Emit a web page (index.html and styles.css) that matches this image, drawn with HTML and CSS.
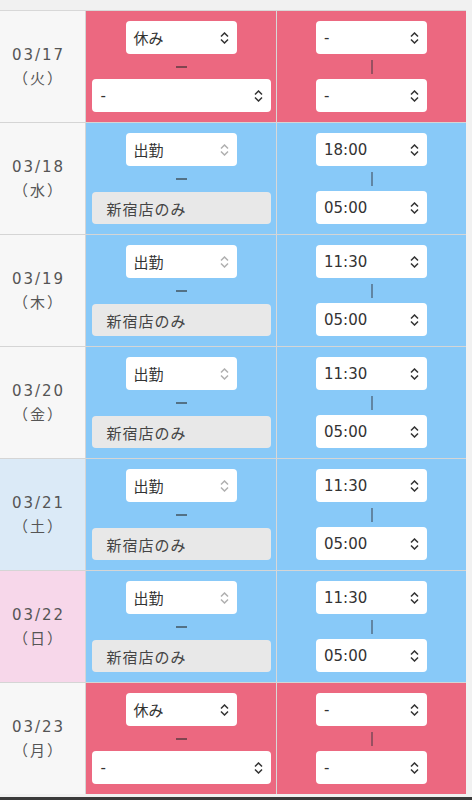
FILE: index.html
```html
<!DOCTYPE html>
<html lang="ja">
<head>
<meta charset="utf-8">
<link rel="stylesheet" href="styles.css">
</head>
<body>
<div class="page">
  <div class="table">

    <div class="row off">
      <div class="date"><span>03/17</span><span>（火）</span></div>
      <div class="cell">
        <div class="sel short"><span>休み</span><svg class="arr" viewBox="0 0 9 12"><path d="M1 4.5 L4.5 1 L8 4.5 M1 7.5 L4.5 11 L8 7.5"/></svg></div>
        <div class="dash"></div>
        <div class="sel wide"><span>-</span><svg class="arr" viewBox="0 0 9 12"><path d="M1 4.5 L4.5 1 L8 4.5 M1 7.5 L4.5 11 L8 7.5"/></svg></div>
      </div>
      <div class="cell">
        <div class="sel short"><span>-</span><svg class="arr" viewBox="0 0 9 12"><path d="M1 4.5 L4.5 1 L8 4.5 M1 7.5 L4.5 11 L8 7.5"/></svg></div>
        <div class="vbar"></div>
        <div class="sel short"><span>-</span><svg class="arr" viewBox="0 0 9 12"><path d="M1 4.5 L4.5 1 L8 4.5 M1 7.5 L4.5 11 L8 7.5"/></svg></div>
      </div>
    </div>

    <div class="row on">
      <div class="date"><span>03/18</span><span>（水）</span></div>
      <div class="cell">
        <div class="sel short"><span>出勤</span><svg class="arr dim" viewBox="0 0 9 12"><path d="M1 4.5 L4.5 1 L8 4.5 M1 7.5 L4.5 11 L8 7.5"/></svg></div>
        <div class="dash"></div>
        <div class="shop">新宿店のみ</div>
      </div>
      <div class="cell">
        <div class="sel short"><span>18:00</span><svg class="arr" viewBox="0 0 9 12"><path d="M1 4.5 L4.5 1 L8 4.5 M1 7.5 L4.5 11 L8 7.5"/></svg></div>
        <div class="vbar"></div>
        <div class="sel short"><span>05:00</span><svg class="arr" viewBox="0 0 9 12"><path d="M1 4.5 L4.5 1 L8 4.5 M1 7.5 L4.5 11 L8 7.5"/></svg></div>
      </div>
    </div>

    <div class="row on">
      <div class="date"><span>03/19</span><span>（木）</span></div>
      <div class="cell">
        <div class="sel short"><span>出勤</span><svg class="arr dim" viewBox="0 0 9 12"><path d="M1 4.5 L4.5 1 L8 4.5 M1 7.5 L4.5 11 L8 7.5"/></svg></div>
        <div class="dash"></div>
        <div class="shop">新宿店のみ</div>
      </div>
      <div class="cell">
        <div class="sel short"><span>11:30</span><svg class="arr" viewBox="0 0 9 12"><path d="M1 4.5 L4.5 1 L8 4.5 M1 7.5 L4.5 11 L8 7.5"/></svg></div>
        <div class="vbar"></div>
        <div class="sel short"><span>05:00</span><svg class="arr" viewBox="0 0 9 12"><path d="M1 4.5 L4.5 1 L8 4.5 M1 7.5 L4.5 11 L8 7.5"/></svg></div>
      </div>
    </div>

    <div class="row on">
      <div class="date"><span>03/20</span><span>（金）</span></div>
      <div class="cell">
        <div class="sel short"><span>出勤</span><svg class="arr dim" viewBox="0 0 9 12"><path d="M1 4.5 L4.5 1 L8 4.5 M1 7.5 L4.5 11 L8 7.5"/></svg></div>
        <div class="dash"></div>
        <div class="shop">新宿店のみ</div>
      </div>
      <div class="cell">
        <div class="sel short"><span>11:30</span><svg class="arr" viewBox="0 0 9 12"><path d="M1 4.5 L4.5 1 L8 4.5 M1 7.5 L4.5 11 L8 7.5"/></svg></div>
        <div class="vbar"></div>
        <div class="sel short"><span>05:00</span><svg class="arr" viewBox="0 0 9 12"><path d="M1 4.5 L4.5 1 L8 4.5 M1 7.5 L4.5 11 L8 7.5"/></svg></div>
      </div>
    </div>

    <div class="row on">
      <div class="date sat"><span>03/21</span><span>（土）</span></div>
      <div class="cell">
        <div class="sel short"><span>出勤</span><svg class="arr dim" viewBox="0 0 9 12"><path d="M1 4.5 L4.5 1 L8 4.5 M1 7.5 L4.5 11 L8 7.5"/></svg></div>
        <div class="dash"></div>
        <div class="shop">新宿店のみ</div>
      </div>
      <div class="cell">
        <div class="sel short"><span>11:30</span><svg class="arr" viewBox="0 0 9 12"><path d="M1 4.5 L4.5 1 L8 4.5 M1 7.5 L4.5 11 L8 7.5"/></svg></div>
        <div class="vbar"></div>
        <div class="sel short"><span>05:00</span><svg class="arr" viewBox="0 0 9 12"><path d="M1 4.5 L4.5 1 L8 4.5 M1 7.5 L4.5 11 L8 7.5"/></svg></div>
      </div>
    </div>

    <div class="row on">
      <div class="date sun"><span>03/22</span><span>（日）</span></div>
      <div class="cell">
        <div class="sel short"><span>出勤</span><svg class="arr dim" viewBox="0 0 9 12"><path d="M1 4.5 L4.5 1 L8 4.5 M1 7.5 L4.5 11 L8 7.5"/></svg></div>
        <div class="dash"></div>
        <div class="shop">新宿店のみ</div>
      </div>
      <div class="cell">
        <div class="sel short"><span>11:30</span><svg class="arr" viewBox="0 0 9 12"><path d="M1 4.5 L4.5 1 L8 4.5 M1 7.5 L4.5 11 L8 7.5"/></svg></div>
        <div class="vbar"></div>
        <div class="sel short"><span>05:00</span><svg class="arr" viewBox="0 0 9 12"><path d="M1 4.5 L4.5 1 L8 4.5 M1 7.5 L4.5 11 L8 7.5"/></svg></div>
      </div>
    </div>

    <div class="row off">
      <div class="date"><span>03/23</span><span>（月）</span></div>
      <div class="cell">
        <div class="sel short"><span>休み</span><svg class="arr" viewBox="0 0 9 12"><path d="M1 4.5 L4.5 1 L8 4.5 M1 7.5 L4.5 11 L8 7.5"/></svg></div>
        <div class="dash"></div>
        <div class="sel wide"><span>-</span><svg class="arr" viewBox="0 0 9 12"><path d="M1 4.5 L4.5 1 L8 4.5 M1 7.5 L4.5 11 L8 7.5"/></svg></div>
      </div>
      <div class="cell">
        <div class="sel short"><span>-</span><svg class="arr" viewBox="0 0 9 12"><path d="M1 4.5 L4.5 1 L8 4.5 M1 7.5 L4.5 11 L8 7.5"/></svg></div>
        <div class="vbar"></div>
        <div class="sel short"><span>-</span><svg class="arr" viewBox="0 0 9 12"><path d="M1 4.5 L4.5 1 L8 4.5 M1 7.5 L4.5 11 L8 7.5"/></svg></div>
      </div>
    </div>

  </div>
  <div class="footer"></div>
</div>
</body>
</html>
```

FILE: styles.css
```css
* { box-sizing: border-box; }
html, body {
  margin: 0;
  padding: 0;
  background: #f1f1f1;
  font-family: "DejaVu Sans", "Noto Sans CJK JP", sans-serif;
  color: #333;
}
.page {
  height: 800px;
  overflow: hidden;
  padding-top: 10px;
}
.table {
  width: 466px;
  border-top: 1px solid #d8d8d8;
}
.row {
  display: grid;
  grid-template-columns: 86px 191px 189px;
  height: 112px;
  border-bottom: 1px solid #d5d5d5;
}
.row:last-child { border-bottom: none; height: 111px; }
.date {
  background: #f7f7f7;
  border-right: 1px solid #d5d5d5;
  display: flex;
  flex-direction: column;
  align-items: center;
  justify-content: center;
  padding-right: 8px;
  font-size: 15px;
  line-height: 24px;
  letter-spacing: 2px;
  color: #555;
}
.date.sat { background: #dbeaf7; }
.date.sun { background: #f7d7ea; }
.cell {
  display: flex;
  flex-direction: column;
  align-items: center;
  justify-content: space-between;
  padding: 10px 6px 10px;
  border-right: 1px solid #d8d8d8;
}
.cell:last-child { border-right: none; }
.off .cell { background: #ec6880; }
.on .cell { background: #88c9f8; }
.sel {
  height: 33px;
  background: #fff;
  border-radius: 4px;
  display: flex;
  align-items: center;
  justify-content: space-between;
  padding: 0 8px 0 8px;
  font-size: 15px;
  color: #333;
}
.sel.short { width: 111px; }
.sel.wide { width: 179px; padding-left: 9px; }
.arr {
  width: 9px;
  height: 12px;
  fill: none;
  stroke: #333;
  stroke-width: 1.5;
}
.arr.dim { stroke: #b0b0b0; }
.dash {
  width: 11px;
  height: 2px;
  background: rgba(40, 40, 40, 0.55);
}
.vbar {
  width: 2px;
  height: 14px;
  background: rgba(50, 50, 60, 0.45);
}
.shop {
  width: 179px;
  height: 32px;
  background: #e8e8e8;
  border-radius: 4px;
  display: flex;
  align-items: center;
  padding-left: 15px;
  font-size: 15px;
  letter-spacing: 1px;
  color: #444;
}
.footer {
  margin-top: 3px;
  height: 20px;
  background: #3a3a3a;
}
```
